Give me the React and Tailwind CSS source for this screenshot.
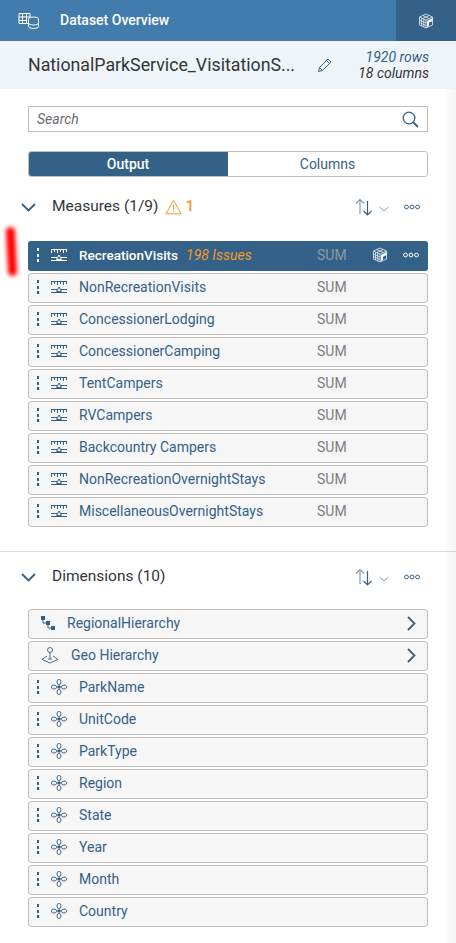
function Dots({ light }) {
  const c = light ? "bg-white" : "bg-[#346187]";
  return (
    <span className="flex w-[2px] flex-col gap-[2.5px]">
      <span className={`h-[3px] w-[2px] ${c}`}></span>
      <span className={`h-[3px] w-[2px] ${c}`}></span>
      <span className={`h-[3px] w-[2px] ${c}`}></span>
    </span>
  );
}

function MeasureIcon({ color = "#346187" }) {
  return (
    <svg width="16" height="13" viewBox="0 0 16 13" fill="none" stroke={color} strokeWidth="1">
      <path d="M0 0.5H16M0.5 0V4M3.5 0V3M6.5 0V4M9.5 0V3M12.5 0V4M15.5 0V3" />
      <path d="M0 8.5H16M0 11.5H16" />
      <path d="M8 6L10.5 10.5H5.5Z" fill={color === "#ffffff" ? "#346187" : "#f6f6f6"} />
    </svg>
  );
}

function DimIcon() {
  return (
    <svg width="16" height="16" viewBox="0 0 16 16" fill="none" stroke="#346187" strokeWidth="0.9">
      <ellipse cx="8" cy="3" rx="2" ry="2.6" />
      <ellipse cx="8" cy="13" rx="2" ry="2.6" />
      <ellipse cx="3" cy="8" rx="2.6" ry="2" />
      <ellipse cx="13" cy="8" rx="2.6" ry="2" />
      <circle cx="8" cy="8" r="1.8" fill="#346187" stroke="none" />
    </svg>
  );
}

function Cube({ size = 16 }) {
  return (
    <svg width={size} height={size} viewBox="0 0 16 16" fill="none" stroke="#ffffff" strokeWidth="0.7">
      <path d="M8 1L14.5 4V12L8 15L1.5 12V4Z" />
      <path d="M1.5 4L8 7L14.5 4M8 7V15" />
      <path d="M4.7 2.5L11.2 5.5M11.3 2.5L4.8 5.5M3.6 5V13M5.8 6V14M1.5 7L8 10M1.5 9.5L8 12.5" />
      <path d="M9 8L14.5 5V8L11 9.7V13L9 14Z" fill="#ffffff" stroke="none" />
    </svg>
  );
}

function More({ color = "#346187" }) {
  return (
    <svg width="16" height="6" viewBox="0 0 16 6" fill="none" stroke={color} strokeWidth="1">
      <circle cx="2.5" cy="3" r="1.9" />
      <circle cx="8" cy="3" r="1.9" />
      <circle cx="13.5" cy="3" r="1.9" />
    </svg>
  );
}

function Chevron() {
  return (
    <svg width="15" height="9" viewBox="0 0 15 9" fill="none" stroke="#346187" strokeWidth="1.8">
      <path d="M1 1L7.5 7.5L14 1" />
    </svg>
  );
}

function SortIcon() {
  return (
    <svg width="34" height="18" viewBox="0 0 34 18" fill="none">
      <path d="M5 16V1.5M1 5.5L5 1.5L9 5.5" stroke="#7fa0bb" strokeWidth="1.2" />
      <path d="M12.5 3V17M8.5 13L12.5 17L16.5 13" stroke="#346187" strokeWidth="1.2" />
      <path d="M24.5 9L29 13L33.500 9" stroke="#7fa0bb" strokeWidth="1" />
    </svg>
  );
}

function SectionHead({ title, extra }) {
  return (
    <div className="flex h-[20px] items-center pl-[21px] pr-[36px]">
      <Chevron />
      <span className="ml-[16px] text-[15.5px] text-[#32363a]">{title}</span>
      {extra}
      <span className="ml-auto"><SortIcon /></span>
      <span className="ml-[15px]"><More /></span>
    </div>
  );
}

function Row({ icon, name, sum, drag = true, chevron }) {
  return (
    <div className="flex h-[30px] items-center rounded-[3px] border border-[#bfbfbf] bg-[#f6f6f6] pb-[2px] pr-[11px]">
      {drag && <span className="ml-[8px] mr-[12px]"><Dots /></span>}
      {icon}
      <span className="ml-[12px] w-[238px] shrink-0 truncate text-[14px] text-[#346187]">{name}</span>
      {sum && <span className="text-[14px] text-[#7e7e7e]">SUM</span>}
      {chevron && (
        <svg className="ml-auto" width="9" height="15" viewBox="0 0 9 15" fill="none" stroke="#346187" strokeWidth="1.8">
          <path d="M1 1L7.5 7.5L1 14" />
        </svg>
      )}
    </div>
  );
}

const measures = ["NonRecreationVisits", "ConcessionerLodging", "ConcessionerCamping", "TentCampers", "RVCampers", "Backcountry Campers", "NonRecreationOvernightStays", "MiscellaneousOvernightStays"];
const dims = ["ParkName", "UnitCode", "ParkType", "Region", "State", "Year", "Month", "Country"];

export default function App() {
  return (
    <div className="relative h-[943px] w-[456px] overflow-hidden bg-white font-['Roboto','Noto_Sans',sans-serif]">
      <header className="flex h-[41px] items-center bg-[#427cac]">
        <svg className="ml-[18px]" width="21" height="17" viewBox="0 0 21 17" fill="none" stroke="#ffffff" strokeWidth="1">
          <path d="M1 1.5H12V11.5H1ZM1 5H12M1 8.5H9M4.5 1.5V11.5M8.5 1.5V11.5" />
          <ellipse cx="15.5" cy="7" rx="5" ry="2" fill="#427cac" />
          <path d="M10.5 7V14.5C10.5 15.6 12.7 16.5 15.5 16.5S20.5 15.6 20.5 14.5V7M10.5 11C10.5 12.1 12.7 13 15.5 13S20.5 12.1 20.5 11" fill="#427cac" />
        </svg>
        <span className="ml-[21px] text-[14px] font-medium text-white">Dataset Overview</span>
        <div className="ml-auto flex h-full w-[60px] items-center justify-center bg-[#346187]">
          <Cube />
        </div>
      </header>

      <div className="flex h-[48px] items-center bg-[#eff4f9] pl-[28px] pr-[27px]">
        <span className="w-[289px] shrink-0 text-[17.75px] text-[#32363a]">NationalParkService_VisitationS...</span>
        <svg width="16" height="16" viewBox="0 0 16 16" fill="none" stroke="#346187" strokeWidth="1">
          <path d="M1.500 14.500L2.500 10.500L11 2L14 5L5.500 13.500ZM9.500 3.500L12.500 6.500M2.500 10.500L5.500 13.500" />
        </svg>
        <div className="ml-auto text-right text-[14px] italic leading-[16px]">
          <div className="text-[#346187]">1920 rows</div>
          <div className="text-[#32363a]">18 columns</div>
        </div>
      </div>

      <div className="mx-[28px] mt-[17px] flex h-[26px] items-center justify-between border border-[#bfbfbf] pl-[8px] pr-[8px]">
        <span className="text-[14px] italic text-[#6a6d70]">Search</span>
        <svg width="17" height="17" viewBox="0 0 17 17" fill="none" stroke="#346187" strokeWidth="1.3">
          <circle cx="7" cy="7" r="5.8" />
          <path d="M11 11L16 16" strokeWidth="1.8" />
        </svg>
      </div>

      <div className="mx-[28px] mt-[19px] flex h-[26px] overflow-hidden rounded-[3px] border border-[#bfbfbf] text-[14px]">
        <div className="-my-px -ml-px flex w-[200px] items-center justify-center bg-[#346187] font-medium text-white">Output</div>
        <div className="flex flex-1 items-center justify-center text-[#346187]">Columns</div>
      </div>

      <div className="mt-[20px]">
        <SectionHead
          title="Measures (1/9)"
          extra={
            <span className="ml-[7px] flex items-center gap-[3px] text-[15.5px] font-medium text-[#f19a2a]">
              <svg width="17" height="16" viewBox="0 0 17 16" fill="none" stroke="#f19a2a" strokeWidth="1">
                <path d="M8.500 1.200L16 14.800H1Z" strokeLinejoin="round" />
                <path d="M8.500 5.500V10.500M8.500 11.800V13" />
              </svg>
              <span>1</span>
            </span>
          }
        />
      </div>

      <div className="mx-[28px] mt-[24px] flex flex-col gap-[2px]">
        <div className="flex h-[30px] items-center rounded-[3px] bg-[#346187] pb-[2px] pr-[9px] text-white">
          <span className="ml-[9px] mr-[12px]"><Dots light /></span>
          <MeasureIcon color="#ffffff" />
          <div className="ml-[12px] flex w-[238px] shrink-0 items-center gap-[8px]">
            <span className="text-[13.5px] font-medium">RecreationVisits</span>
            <span className="text-[14px] italic text-[#f19a2a]">198 Issues</span>
          </div>
          <span className="text-[14px] text-[#8a9aa8]">SUM</span>
          <span className="ml-auto mr-[15px]"><Cube /></span>
          <More color="#ffffff" />
        </div>
        {measures.map((m) => (
          <Row key={m} icon={<MeasureIcon />} name={m} sum />
        ))}
      </div>

      <div className="mt-[24px] h-px bg-[#d9d9d9]"></div>

      <div className="mt-[15px]">
        <SectionHead title="Dimensions (10)" />
      </div>

      <div className="mx-[28px] mt-[22px] flex flex-col gap-[2px]">
        <Row
          drag={false}
          chevron
          name="RegionalHierarchy"
          icon={
            <svg className="ml-[12px]" width="14" height="15" viewBox="0 0 14 15" fill="#346187" stroke="none">
              <path d="M0 0H4V4H0ZM5 5H9V9H5ZM10 10H14V14H10Z" />
              <path d="M2 4V7H5M7 9V12H10" fill="none" stroke="#346187" />
            </svg>
          }
        />
        <Row
          drag={false}
          chevron
          name="Geo Hierarchy"
          icon={
            <svg className="ml-[12px]" width="18" height="17" viewBox="0 0 18 17" fill="none" stroke="#346187" strokeWidth="0.9">
              <circle cx="9" cy="3" r="2.500" />
              <path d="M9 5.500V12M6 9L1 12.500L9 16L17 12.500L12 9M7 12H11" />
            </svg>
          }
        />
        {dims.map((d) => (
          <Row key={d} icon={<DimIcon />} name={d} />
        ))}
      </div>

      <div className="pointer-events-none absolute left-[7px] top-[227px] h-[49px] w-[9px] rotate-[-3deg] rounded-full bg-[#ff0000] blur-[2px]"></div>
      <div className="pointer-events-none absolute right-0 top-[89px] h-[854px] w-[12px] bg-gradient-to-r from-transparent to-black/[0.04]"></div>
    </div>
  );
}
